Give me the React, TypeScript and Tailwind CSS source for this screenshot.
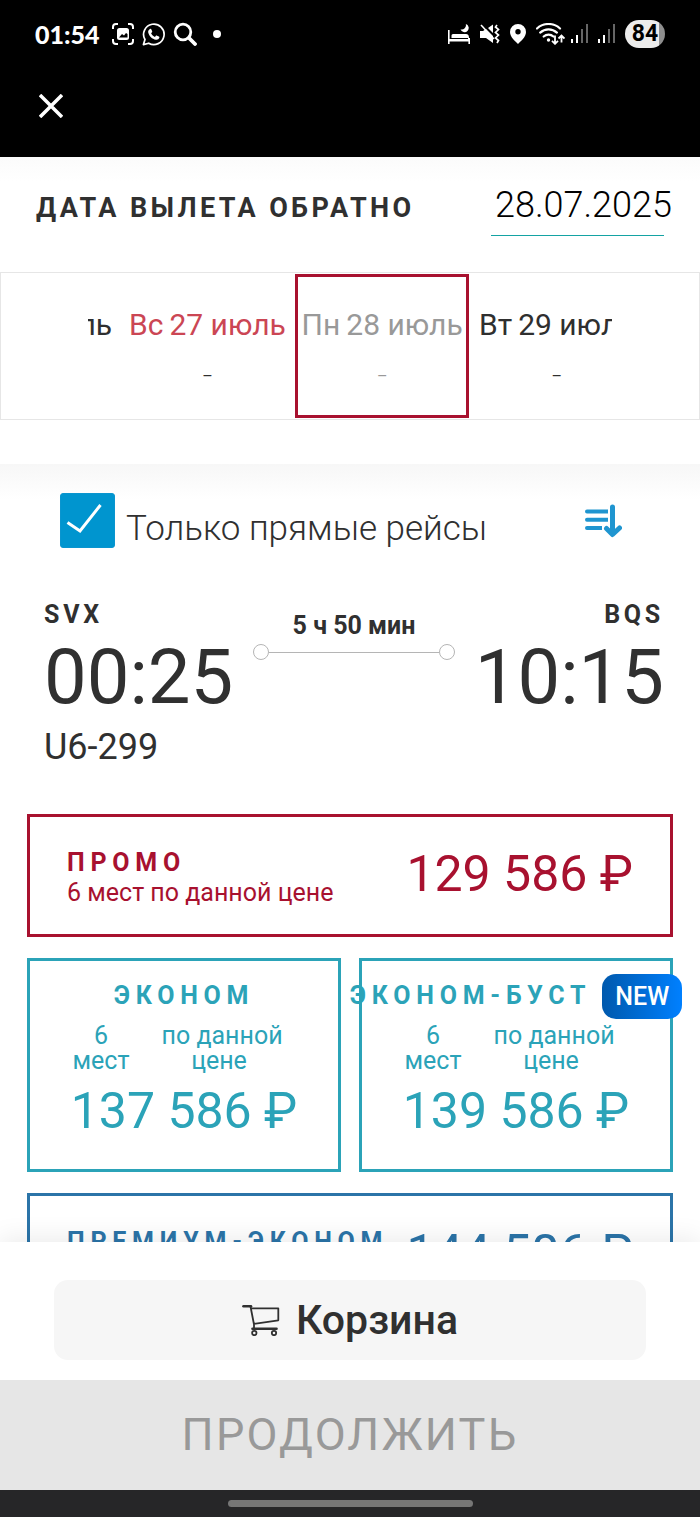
import React, { useState } from 'react'

interface Day {
  weekday: string
  date: string
  tone: string
  selected?: boolean
}

interface Fare {
  name: string
  price: string
  tone: string
  isNew?: boolean
}

const DAYS: Day[] = [
  { weekday: 'Сб', date: '26 июль', tone: 'text-[#2f2f2f]' },
  { weekday: 'Вс', date: '27 июль', tone: 'text-[#cb4654]' },
  { weekday: 'Пн', date: '28 июль', tone: 'text-[#999999]', selected: true },
  { weekday: 'Вт', date: '29 июль', tone: 'text-[#2f2f2f]' },
]

const PROMO: Fare = { name: 'ПРОМО', price: '129 586 ₽', tone: 'border-[#a8112f] text-[#a8112f]' }
const PREMIUM: Fare = { name: 'ПРЕМИУМ-ЭКОНОМ', price: '144 586 ₽', tone: 'border-[#2b74a8] text-[#2b74a8]' }
const ECONOMY: Fare[] = [
  { name: 'ЭКОНОМ', price: '137 586 ₽', tone: 'border-[#2ba3b8] text-[#2ba3b8]' },
  { name: 'ЭКОНОМ-БУСТ', price: '139 586 ₽', tone: 'border-[#2ba3b8] text-[#2ba3b8]', isNew: true },
]

export default function App() {
  return (
    <div className="flex h-screen flex-col overflow-hidden bg-white font-['Roboto',sans-serif] text-[#303030]">
      <header className="shrink-0 bg-black pb-[37px] text-white">
        <StatusBar />
        <button className="ml-[37px] mt-6 block p-0.5" aria-label="Закрыть">
          <svg className="block size-6" viewBox="0 0 24 24" fill="none" stroke="currentColor" strokeWidth="3.500">
            <path d="M1 1l22 22M23 1L1 23" />
          </svg>
        </button>
      </header>

      <main className="min-h-0 flex-1 overflow-hidden">
        <ReturnDate />
        <section className="bg-linear-to-b from-[#f7f7f7] to-white to-[36px] pt-[29px]">
          <Filters />
          <Flight />
          <div className="mt-[47px] flex flex-col gap-[21px] px-[27px]">
            <WideFare fare={PROMO} />
            <div className="grid grid-cols-2 gap-[18px]">
              {ECONOMY.map((fare) => <NarrowFare key={fare.name} fare={fare} />)}
            </div>
            <WideFare fare={PREMIUM} />
          </div>
        </section>
      </main>

      <Footer />
    </div>
  )
}

function StatusBar() {
  return (
    <div className="flex h-[68px] items-center justify-between px-[35px]">
      <div className="flex items-center gap-2">
        <span className="mr-1 font-['Lato',sans-serif] text-[25px] font-black leading-8">01:54</span>
        {/* screenshot */}
        <svg className="size-[22px]" viewBox="0 0 22 22" fill="none" stroke="white" strokeWidth="2">
          <path d="M1 6V4a3 3 0 013-3h2M16 1h2a3 3 0 013 3v2M21 16v2a3 3 0 01-3 3h-2M6 21H4a3 3 0 01-3-3v-2" />
          <rect x="5" y="5" width="12" height="12" rx="2.500" fill="white" stroke="none" />
          <path d="M7 14.500l3-3.500 2 1.500 2-2.500 1.500 1v3.500z" fill="black" stroke="none" />
        </svg>
        {/* messenger */}
        <svg className="size-[23px]" viewBox="0 0 24 24">
          <path d="M1.500 22.500l1.600-5.300A10.700 10.700 0 117 21.100z" fill="none" stroke="white" strokeWidth="1.800" strokeLinejoin="round" />
          <path d="M8.300 6.200c.6-.3 1.300-.1 1.500.5l.8 1.900c.2.500 0 1-.4 1.400l-.7.700c.9 1.700 2.200 3 4 3.800l.8-1c.3-.4.900-.6 1.400-.3l1.900.9c.6.3.7.8.5 1.400-.5 1.500-2 2.300-3.500 2-4.100-.8-7.200-3.700-8.100-7.600-.3-1.500.4-3 1.800-3.700z" fill="white" />
        </svg>
        <svg className="size-6" viewBox="0 0 24 24" fill="none" stroke="white" strokeLinecap="round">
          <circle cx="10" cy="10" r="7.800" strokeWidth="2.800" />
          <path d="M16 16l6 6" strokeWidth="3.800" />
        </svg>
        <span className="ml-2 size-2 rounded-full bg-white" />
      </div>

      <div className="flex items-center gap-2.5">
        {/* sleep mode */}
        <svg className="h-[20px] w-[22px]" viewBox="0 0 22 20" fill="white">
          <path d="M0 6h1.600v9H20v-1h2v6h-1.600v-2.500H1.600V20H0z" />
          <path d="M3.500 14v-2.500a1.500 1.500 0 011.500-1.500h13c2 0 3 1.500 3 4z" />
          <path d="M17.800 0a4.200 4.200 0 11-5.300 5.300A4.300 4.300 0 0017.800 0z" />
        </svg>
        {/* vibration */}
        <svg className="h-[20px] w-[20px]" viewBox="0 0 20 20">
          <path d="M0 7h3l3-2 7 7v7l-7-5H0zM8 4l5-3.500V9z" fill="white" />
          <path d="M1 1l13 14" stroke="white" strokeWidth="1.600" />
          <path d="M17 1l-1.500 2L18.500 5.500 15.500 8.500l3 2.500-3 3 3 2.500L17 19" fill="none" stroke="white" strokeWidth="1.700" />
        </svg>
        <svg className="h-[20px] w-4" viewBox="0 0 16 20" fill="white">
          <path fillRule="evenodd" d="M8 0a8 8 0 018 8c0 5-5 9-8 12C5 17 0 13 0 8a8 8 0 018-8zm0 5a2.700 2.700 0 100 5.400A2.700 2.700 0 008 5z" />
        </svg>
        {/* wi-fi with traffic arrows */}
        <svg className="-mr-1 h-[22px] w-[29px]" viewBox="0 0 29 22" fill="none" stroke="white" strokeWidth="2.200">
          <path d="M1 5.500c6.500-6 16.500-6 23 0M4.200 9.600c4.700-4.300 12-4.300 16.700 0M7.700 13.500c2.700-2.500 7-2.500 9.700 0" strokeLinecap="round" />
          <circle cx="12.500" cy="17" r="1.700" fill="white" stroke="none" />
          <path d="M19 12.500v8M16 17.800l3 3 3-3M25.500 19.500v-7M22.500 15.500l3-3 3 3" strokeWidth="1.800" />
        </svg>
        <Signal />
        <Signal />
        <span className="flex h-[28px] w-10 items-center justify-center rounded-full bg-linear-to-r from-[#ececec] from-85% to-[#8f8f8f] to-85% text-[23px] font-bold leading-7 text-black">
          84
        </span>
      </div>
    </div>
  )
}

function Signal() {
  return (
    <svg className="h-[20px] w-[17px]" viewBox="0 0 17 20" fill="white">
      <rect x="0" y="15" width="2" height="4" />
      <rect x="5" y="11" width="2" height="8" />
      <rect x="10" y="5" width="2" height="14" opacity=".4" />
      <rect x="15" y="0" width="2" height="19" opacity=".4" />
    </svg>
  )
}

/* ─── Return date ─── */

function ReturnDate() {
  const [date, setDate] = useState('28.07.2025')

  return (
    <section className="bg-linear-to-b from-[#fbfbfb] to-white to-[24px] pt-[26px]">
      <div className="flex items-baseline justify-between pl-[36px] pr-9">
        <label htmlFor="return-date" className="whitespace-nowrap text-[27px] font-bold leading-[44px] tracking-[0.125em]">
          ДАТА ВЫЛЕТА ОБРАТНО
        </label>
        <div className="w-[173px] border-b border-[#14a3a3] pb-2">
          <input
            id="return-date"
            value={date}
            onChange={(e) => setDate(e.target.value)}
            className="block w-[188px] bg-transparent pl-1 text-[36px] font-light leading-[44px] text-black outline-none"
          />
        </div>
      </div>

      {/* Day carousel, the outer days are cut off by the strip */}
      <div className="mb-11 mt-9 border border-[#e6e6e6] px-[87px]">
        <div className="overflow-hidden">
          <div className="-ml-[27.2%] flex w-full">
            {DAYS.map((day) => (
              <button
                key={day.date}
                className={`mb-px mt-px flex h-36 w-1/3 shrink-0 flex-col items-center border-3 pt-[30px] ${day.selected ? 'border-[#a8112f] text-[#999999]' : 'border-transparent text-[#2f2f2f]'}`}
              >
                <span className={`flex gap-1.5 whitespace-nowrap text-[30px] leading-9 ${day.tone}`}>
                  <span>{day.weekday}</span>
                  <span>{day.date}</span>
                </span>
                <span className="mt-[22px] text-[16px] leading-6">–</span>
              </button>
            ))}
          </div>
        </div>
      </div>
    </section>
  )
}

function Filters() {
  const [directOnly, setDirectOnly] = useState(true)

  return (
    <div className="flex items-start justify-between pl-[60px] pr-[78px]">
      <label className="flex items-start gap-[11px]">
        <span className="relative block size-[55px]">
          <input
            type="checkbox"
            checked={directOnly}
            onChange={(e) => setDirectOnly(e.target.checked)}
            className="peer block size-[55px] appearance-none rounded-[3px] border border-[#0a95cf] checked:bg-[#0095cf]"
          />
          <svg className="pointer-events-none absolute inset-0 hidden peer-checked:block" viewBox="0 0 55 55" fill="none">
            <path d="M7.500 29.500L20 38 40.500 12" stroke="white" strokeWidth="3" />
          </svg>
        </span>
        <span className="mt-3.5 text-[35px] font-light leading-[44px]">Только прямые рейсы</span>
      </label>
      <button className="mt-[11px]" aria-label="Сортировка">
        <svg className="block h-[34px] w-[37px]" viewBox="0 0 37 34" fill="none">
          <path d="M2 5.500h21v4H2a2 2 0 010-4zM2 13.700h21v4H2a2 2 0 010-4zM2 22h15v4H2a2 2 0 010-4z" fill="#1f95d0" />
          <path d="M27.500 3v27M21.500 24.500l6 6 7-6.500" stroke="#1f95d0" strokeWidth="5" strokeLinecap="round" strokeLinejoin="round" />
        </svg>
      </button>
    </div>
  )
}

function Flight() {
  return (
    <div className="mt-[49px] flex items-start pl-11 pr-9">
      <div>
        <div className="text-[25px] font-bold leading-[30px] tracking-[0.15em]">SVX</div>
        <div className="mt-[7px] text-[76px] leading-[80px]">00:25</div>
        <div className="mt-2.5 text-[36px] leading-10">U6-299</div>
      </div>
      <div className="flex-1 px-5 pt-[11px]">
        <div className="text-center text-[25px] font-bold leading-[30px]">5 ч 50 мин</div>
        <div className="mt-[3px] flex items-center">
          <span className="size-4 rounded-full border border-[#b5b5b5]" />
          <span className="h-px flex-1 bg-[#b5b5b5]" />
          <span className="size-4 rounded-full border border-[#b5b5b5]" />
        </div>
      </div>
      <div className="text-right">
        <div className="text-[25px] font-bold leading-[30px] tracking-[0.15em]">BQS</div>
        <div className="mt-[7px] text-[76px] leading-[80px]">10:15</div>
      </div>
    </div>
  )
}

/* ─── Fares ─── */

function WideFare({ fare }: { fare: Fare }) {
  return (
    <button className={`flex h-[123px] items-center justify-between border-3 px-[37px] text-left ${fare.tone}`}>
      <span className="flex flex-col pt-1">
        <span className="whitespace-nowrap text-[25px] font-bold leading-[30px] tracking-[0.23em]">{fare.name}</span>
        <span className="text-[25px] leading-[30px]">6 мест по данной цене</span>
      </span>
      <span className="whitespace-nowrap pb-1 text-[50px] leading-[60px]">{fare.price}</span>
    </button>
  )
}

function NarrowFare({ fare }: { fare: Fare }) {
  return (
    <button className={`flex flex-col items-center border-3 pb-7 pt-5 ${fare.tone}`}>
      <span className="flex items-center gap-[11px] whitespace-nowrap">
        <span className="text-[25px] font-bold leading-[30px] tracking-[0.23em]">{fare.name}</span>
        {fare.isNew && (
          <span className="-my-2 rounded-[14px] bg-linear-to-r from-[#0059ad] to-[#0080ff] px-[13px] text-[25px] font-medium leading-[45px] text-white">
            NEW
          </span>
        )}
      </span>
      <span className="mr-3 mt-3 flex gap-6 text-[25px] leading-[25px]">
        <span className="w-[58px]">6 мест</span>
        <span className="w-[130px]">{'\u00a0'}по данной цене</span>
      </span>
      <span className="mt-2 whitespace-nowrap text-[50px] leading-[60px]">{fare.price}</span>
    </button>
  )
}

/* ─── Footer ─── */

function Footer() {
  return (
    <footer className="relative shrink-0 bg-white shadow-[0_-4px_24px_rgba(0,0,0,0.08)]">
      <div className="px-[54px] pb-5 pt-[38px]">
        <button className="flex h-20 w-full items-center justify-center gap-4 rounded-[14px] bg-[#f6f6f6]">
          <svg className="h-8 w-[38px]" viewBox="0 0 38 32" fill="none" stroke="#303030" strokeWidth="1.800" strokeLinejoin="round">
            <path d="M1.500 2.300h7.500" strokeWidth="2.600" strokeLinecap="round" />
            <path d="M8.500 2.500L12 20.500v4M9 4.300h27.300v12L12 19.800" />
            <path d="M10.500 24.700h24" strokeWidth="2.600" strokeLinecap="round" />
            <circle cx="12.300" cy="29" r="2.200" />
            <circle cx="32" cy="29" r="2.200" />
          </svg>
          <span className="text-[41px] font-medium leading-[48px]">Корзина</span>
        </button>
      </div>
      <button className="block h-[110px] w-full bg-[#e6e6e6] text-[45px] tracking-[0.05em] text-[#999999]" disabled>
        ПРОДОЛЖИТЬ
      </button>
      <div className="flex h-[27px] items-center justify-center bg-[#262628]">
        <span className="h-[7px] w-[35%] rounded-full bg-[#767676]" />
      </div>
    </footer>
  )
}
